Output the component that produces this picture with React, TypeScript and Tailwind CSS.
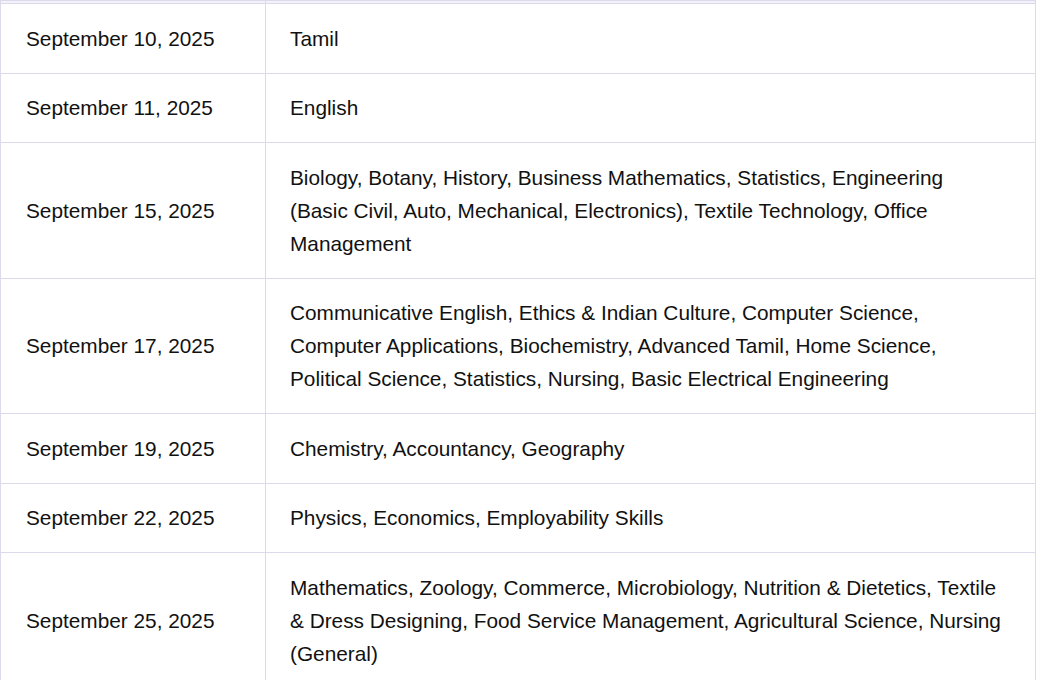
const rows: [string, string][] = [
  ['September 10, 2025', 'Tamil'],
  ['September 11, 2025', 'English'],
  [
    'September 15, 2025',
    'Biology, Botany, History, Business Mathematics, Statistics, Engineering (Basic Civil, Auto, Mechanical, Electronics), Textile Technology, Office Management',
  ],
  [
    'September 17, 2025',
    'Communicative English, Ethics & Indian Culture, Computer Science, Computer Applications, Biochemistry, Advanced Tamil, Home Science, Political Science, Statistics, Nursing, Basic Electrical Engineering',
  ],
  ['September 19, 2025', 'Chemistry, Accountancy, Geography'],
  ['September 22, 2025', 'Physics, Economics, Employability Skills'],
  [
    'September 25, 2025',
    'Mathematics, Zoology, Commerce, Microbiology, Nutrition & Dietetics, Textile & Dress Designing, Food Service Management, Agricultural Science, Nursing (General)',
  ],
];

export default function App() {
  return (
    <div className="w-[1037px] h-[680px] overflow-hidden bg-white font-['Liberation_Sans',Arial,sans-serif] text-[#111111]">
      <table className="w-[1036px] border-collapse table-fixed text-[20.8px] leading-[33px]">
        <colgroup>
          <col className="w-[265px]" />
          <col />
        </colgroup>
        <thead>
          <tr>
            <th className="h-[3px] p-0 bg-[#f3f1f9] border border-[#dcd9ea]" />
            <th className="h-[3px] p-0 bg-[#f3f1f9] border border-[#dcd9ea]" />
          </tr>
        </thead>
        <tbody>
          {rows.map(([date, subjects]) => (
            <tr key={date}>
              <td className="border border-[#dcd9ea] px-[25px] pt-[17.5px] pb-[18px] align-middle">
                {date}
              </td>
              <td className="border border-[#dcd9ea] pl-[24px] pr-[31px] pt-[17.5px] pb-[18px] align-middle">
                {subjects}
              </td>
            </tr>
          ))}
        </tbody>
      </table>
    </div>
  );
}
